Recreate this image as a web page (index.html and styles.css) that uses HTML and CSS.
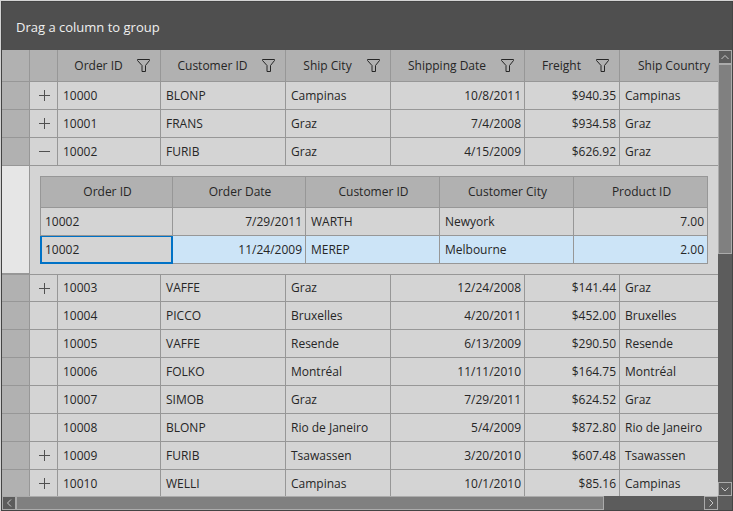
FILE: index.html
```
<!DOCTYPE html>
<html lang="en">
<head>
<meta charset="utf-8">
<meta name="viewport" content="width=device-width, initial-scale=1">
<title>Orders</title>
<link rel="stylesheet" href="styles.css">
</head>
<body>
<svg class="symbols" aria-hidden="true">
  <symbol id="funnel" viewBox="0 0 13 13"><path d="M.5.5H12.5V1.500L8.500 6.500V12.500H5V6.500L.5 1.500Z"/></symbol>
  <symbol id="plus" viewBox="0 0 11 11"><path d="M0 5.5H11M5.5 0V11"/></symbol>
  <symbol id="minus" viewBox="0 0 11 11"><path d="M0 5.5H11"/></symbol>
</svg>
<main class="grid">
  <header class="group-panel">Drag a column to group</header>
  <div class="view">
    <table class="orders">
      <colgroup>
        <col class="c-head"><col class="c-toggle"><col class="c-order"><col class="c-customer"><col class="c-city"><col class="c-date"><col class="c-freight"><col>
      </colgroup>
      <thead>
        <tr>
          <th></th><th></th>
          <th><div class="head"><span>Order ID</span><button aria-label="Filter Order ID"><svg><use href="#funnel"/></svg></button></div></th>
          <th><div class="head"><span>Customer ID</span><button aria-label="Filter Customer ID"><svg><use href="#funnel"/></svg></button></div></th>
          <th><div class="head"><span>Ship City</span><button aria-label="Filter Ship City"><svg><use href="#funnel"/></svg></button></div></th>
          <th><div class="head"><span>Shipping Date</span><button aria-label="Filter Shipping Date"><svg><use href="#funnel"/></svg></button></div></th>
          <th><div class="head"><span>Freight</span><button aria-label="Filter Freight"><svg><use href="#funnel"/></svg></button></div></th>
          <th><div class="head"><span>Ship Country</span><button aria-label="Filter Ship Country"><svg><use href="#funnel"/></svg></button></div></th>
        </tr>
      </thead>
      <tbody>
        <tr><td class="rowhead"></td><td class="toggle"><button aria-label="Expand 10000"><svg><use href="#plus"/></svg></button></td><td>10000</td><td>BLONP</td><td>Campinas</td><td class="num">10/8/2011</td><td class="num">$940.35</td><td>Campinas</td></tr>
        <tr><td class="rowhead"></td><td class="toggle"><button aria-label="Expand 10001"><svg><use href="#plus"/></svg></button></td><td>10001</td><td>FRANS</td><td>Graz</td><td class="num">7/4/2008</td><td class="num">$934.58</td><td>Graz</td></tr>
        <tr><td class="rowhead"></td><td class="toggle"><button aria-label="Collapse 10002"><svg><use href="#minus"/></svg></button></td><td>10002</td><td>FURIB</td><td>Graz</td><td class="num">4/15/2009</td><td class="num">$626.92</td><td>Graz</td></tr>
        <tr>
          <td class="rowhead open"></td>
          <td class="detail" colspan="7">
            <table class="items">
              <colgroup><col class="c-item"><col class="c-item"><col><col><col></colgroup>
              <thead><tr><th>Order ID</th><th>Order Date</th><th>Customer ID</th><th>Customer City</th><th>Product ID</th></tr></thead>
              <tbody>
                <tr><td>10002</td><td class="num">7/29/2011</td><td>WARTH</td><td>Newyork</td><td class="num">7.00</td></tr>
                <tr class="selected"><td class="current">10002</td><td class="num">11/24/2009</td><td>MEREP</td><td>Melbourne</td><td class="num">2.00</td></tr>
              </tbody>
            </table>
          </td>
        </tr>
        <tr class="after-detail"><td class="rowhead"></td><td class="toggle"><button aria-label="Expand 10003"><svg><use href="#plus"/></svg></button></td><td>10003</td><td>VAFFE</td><td>Graz</td><td class="num">12/24/2008</td><td class="num">$141.44</td><td>Graz</td></tr>
        <tr><td class="rowhead"></td><td></td><td>10004</td><td>PICCO</td><td>Bruxelles</td><td class="num">4/20/2011</td><td class="num">$452.00</td><td>Bruxelles</td></tr>
        <tr><td class="rowhead"></td><td></td><td>10005</td><td>VAFFE</td><td>Resende</td><td class="num">6/13/2009</td><td class="num">$290.50</td><td>Resende</td></tr>
        <tr><td class="rowhead"></td><td></td><td>10006</td><td>FOLKO</td><td>Montréal</td><td class="num">11/11/2010</td><td class="num">$164.75</td><td>Montréal</td></tr>
        <tr><td class="rowhead"></td><td></td><td>10007</td><td>SIMOB</td><td>Graz</td><td class="num">7/29/2011</td><td class="num">$624.52</td><td>Graz</td></tr>
        <tr><td class="rowhead"></td><td></td><td>10008</td><td>BLONP</td><td>Rio de Janeiro</td><td class="num">5/4/2009</td><td class="num">$872.80</td><td>Rio de Janeiro</td></tr>
        <tr><td class="rowhead"></td><td class="toggle"><button aria-label="Expand 10009"><svg><use href="#plus"/></svg></button></td><td>10009</td><td>FURIB</td><td>Tsawassen</td><td class="num">3/20/2010</td><td class="num">$607.48</td><td>Tsawassen</td></tr>
        <tr><td class="rowhead"></td><td class="toggle"><button aria-label="Expand 10010"><svg><use href="#plus"/></svg></button></td><td>10010</td><td>WELLI</td><td>Campinas</td><td class="num">10/1/2010</td><td class="num">$85.16</td><td>Campinas</td></tr>
      </tbody>
    </table>
  </div>
  <div class="bar vertical">
    <button aria-label="Scroll up"><svg viewBox="0 0 12 12"><path d="M2.500 8 6 4.500 9.500 8"/></svg></button>
    <div class="thumb"></div><div class="track"></div>
    <button aria-label="Scroll down"><svg viewBox="0 0 12 12"><path d="M2.500 4.500 6 8 9.500 4.500"/></svg></button>
  </div>
  <div class="bar horizontal">
    <button aria-label="Scroll left"><svg viewBox="0 0 12 12"><path d="M8 2.500 4.500 6 8 9.500"/></svg></button>
    <div class="thumb"></div><div class="track"></div>
    <button aria-label="Scroll right"><svg viewBox="0 0 12 12"><path d="M4.500 2.500 8 6 4.500 9.500"/></svg></button>
  </div>
</main>
</body>
</html>
```
FILE: styles.css
```
* { box-sizing: border-box; }

:root {
  --line: #979797;
  --head: #b1b1b1;
  --cell: #d4d4d4;
  --dark: #4f4f4f;
  --track: #5c5c5c;
  --edge: #ababab;
  --text: #262626;
}

body {
  margin: 0;
  padding: 1px 0 0 1px;
  height: 100vh;
  overflow: hidden;
  background: var(--cell);
  color: var(--text);
  font: 12px/16px "Open Sans", "Noto Sans", sans-serif;
}

.symbols { display: none; }

button {
  padding: 0;
  border: 0;
  background: none;
  color: inherit;
  display: block;
}

svg { display: block; fill: none; stroke: currentColor; }

.grid {
  height: 100%;
  display: grid;
  grid-template-columns: minmax(0, 1fr) 14px;
  grid-template-rows: 48px minmax(0, 1fr) 14px;
  border: 1px solid #444;
  background: var(--track);
}

.group-panel {
  grid-column: 1 / -1;
  display: flex;
  align-items: center;
  padding: 2px 14px 0;
  background: var(--dark);
  color: #f0f0f0;
  font-size: 13px;
}

.view { overflow: hidden; background: var(--cell); }

table {
  table-layout: fixed;
  border-collapse: separate;
  border-spacing: 0;
}

.orders { width: calc(100% + 32px); }

.c-head, .c-toggle { width: 28px; }
.c-order { width: 103px; }
.c-customer { width: 125px; }
.c-city { width: 105px; }
.c-date { width: 134px; }
.c-freight { width: 95px; }
.c-item { width: 133px; }

th, td {
  height: 28px;
  padding: 0 3px 0 5px;
  border: solid var(--line);
  border-width: 0 1px 1px 0;
  text-align: left;
  white-space: nowrap;
}

th {
  height: 32px;
  padding: 0;
  background: var(--head);
  font-weight: 400;
  text-align: center;
}

.num { text-align: right; }

.head { display: flex; align-items: center; padding: 0 10px 0 2px; }
.head span { flex: 1; }
.head svg { width: 13px; height: 13px; }

.rowhead { background: var(--head); }
.rowhead.open { background: #e6e6e6; border-bottom-width: 2px; }

.toggle { padding: 0 0 0 2px; }
.toggle button { margin: 0 auto; color: #505050; }
.toggle svg { width: 11px; height: 11px; }

.after-detail td { height: 27px; }

.detail { padding: 10px 41px 10px 10px; }

.items { width: 100%; border-top: 1px solid var(--line); }
.items th { height: 31px; padding-left: 2px; }
.items th:first-child, .items td:first-child { border-left-width: 1px; }
.items td:first-child { padding-left: 4px; }
.selected td { background: #cce4f7; }
.items .current {
  background: var(--cell);
  border-color: #0072c6;
  box-shadow: inset 1px 1px #0072c6, inset -1px -1px #0072c6;
}

.bar { display: flex; background: var(--track); }
.vertical { flex-direction: column; }
.bar button {
  flex: none;
  width: 14px;
  height: 14px;
  border: 1px solid var(--edge);
  background: var(--track);
  color: #c8c8c8;
}
.bar svg { width: 12px; height: 12px; }
.thumb { background: #808080; border: 1px solid var(--edge); }
.vertical .thumb { flex: 189; }
.vertical .track { flex: 229; }
.horizontal .thumb { flex: 147; }
.horizontal .track { flex: 25; }
```
